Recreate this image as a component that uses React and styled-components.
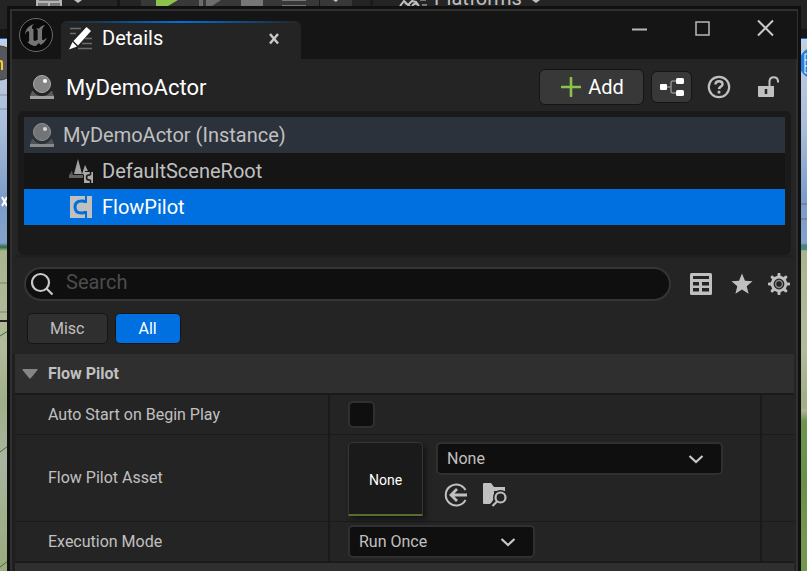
import React, { useState } from "react";
import styled, { createGlobalStyle, css } from "styled-components";
import { SiUnrealengine } from "react-icons/si";

const color = {
  panel: "#242424",
  recessed: "#1a1a1a",
  title: "#151515",
  header: "#2f2f2f",
  input: "#0f0f0f",
  outline: "#383838",
  text: "#c0c0c0",
  white: "#ffffff",
  blue: "#0070e0",
  green: "#8bc24a",
};

const GlobalStyle = createGlobalStyle`
  * { box-sizing: border-box; }
  body { margin: 0; background: #151515; }
  body, button, input, select { font-family: Roboto, "Liberation Sans", sans-serif; }
  button { border: 0; padding: 0; background: none; color: inherit; cursor: pointer; }
  svg { display: block; flex: none; }
`;

/* ---------- editor behind the floating window ---------- */

const Page = styled.div`
  position: relative;
  height: 100vh;
  overflow: hidden;
  padding: 6px 6px 0 7px;
  color: ${color.text};
`;

const Editor = styled.div`
  position: absolute;
  inset: 0;
  display: flex;
  flex-direction: column;
`;

const EditorToolbar = styled.div`
  flex: none;
  height: 29px;
  padding-left: 36px;
  display: flex;
  align-items: flex-start;
  background: ${color.panel};
`;

const PlatformsLabel = styled.span`
  margin: -14px 9px 0 0;
  font-size: 20px;
  line-height: 24px;
`;

const EditorTabs = styled.div`
  flex: none;
  height: 10px;
  background: ${color.title};
  border-bottom: 1px solid ${color.blue};
`;

const Scene = styled.div`
  flex: 1;
  display: flex;
  justify-content: space-between;
  background: linear-gradient(
    #c3cfe2 0,
    #a9bcda 90px,
    #7b9cc8 160px,
    #83a3cc 204px,
    #2f6b45 208px,
    #a9b58f 212px,
    #b2ba9d 310px,
    #a0af88 360px,
    #a9b5a0 420px,
    #9dab80 520px
  );
`;

const RightEdge = styled.div`
  width: 6px;
  background: linear-gradient(transparent 370px, #b0b69c 371px, #6f9450 382px, #6a8f4c 440px, #74964f 500px);
`;

/* ---------- details window ---------- */

const Window = styled.main`
  position: relative;
  min-height: 100vh;
  border: 3px solid #101010;
  background: ${color.panel};
  box-shadow: inset 0 0 0 2px #303030;
  padding: 2px 1px 0 2px;
`;

const TitleBar = styled.header`
  height: 48px;
  padding-left: 7px;
  display: flex;
  align-items: flex-start;
  background: ${color.title};
`;

const EngineBadge = styled.div`
  width: 34px;
  height: 34px;
  margin: 7px 8px 0 0;
  display: grid;
  place-content: center;
  overflow: hidden;
  border: 1px solid #6c6c6c;
  border-radius: 50%;
  background: #0b0b0b;
  color: #747474;
`;

const Tab = styled.div`
  position: relative;
  width: 240px;
  height: 38px;
  margin-top: 10px;
  padding: 0 19px 4px 8px;
  display: flex;
  align-items: center;
  gap: 8px;
  overflow: hidden;
  border-radius: 6px 6px 0 0;
  background: ${color.panel};

  &::before {
    content: "";
    position: absolute;
    inset: 0 0 auto;
    height: 2px;
    background: linear-gradient(90deg, ${color.panel}, ${color.blue}, ${color.panel});
  }
`;

const TabTitle = styled.h1`
  margin: 0;
  flex: 1;
  font-size: 20px;
  line-height: 24px;
  font-weight: 400;
  color: ${color.white};
`;

const WindowControls = styled.div`
  margin-left: auto;
  padding: 7px 20px 0 0;
  display: flex;
  gap: 41px;
`;

const IconButton = styled.button`
  display: grid;
  place-items: center;
  color: ${color.text};
`;

const ActorBar = styled.div`
  height: 52px;
  padding: 4px 18px 0 18px;
  display: flex;
  align-items: center;
`;

const ActorName = styled.h2`
  margin: 0 auto 0 12px;
  padding-top: 2px;
  font-size: 22px;
  line-height: 28px;
  font-weight: 400;
  color: ${color.white};
`;

const RaisedButton = styled.button`
  height: ${(p) => (p.$small ? 32 : 36)}px;
  width: ${(p) => (p.$small ? 41 : 105)}px;
  margin-right: ${(p) => (p.$small ? 15 : 7)}px;
  padding-left: ${(p) => (p.$small ? 0 : 2)}px;
  display: flex;
  align-items: center;
  justify-content: center;
  gap: 7px;
  border: 1px solid #141414;
  border-radius: 6px;
  background: #383838;
  color: ${color.white};
  font-size: 20px;
  line-height: 24px;
`;

const Tree = styled.div`
  height: 144px;
  margin: 0 6px;
  padding: 6px;
  border-radius: 6px;
  background: ${color.recessed};
`;

const treeTone = {
  root: css`
    padding-left: 6px;
    gap: 9px;
    background: #2b323b;
  `,
  child: css`
    background: ${color.title};
  `,
  selected: css`
    background: ${color.blue};
    color: ${color.white};
  `,
};

const TreeRow = styled.button`
  width: 100%;
  height: 36px;
  padding-left: 45px;
  display: flex;
  align-items: center;
  gap: 8px;
  font-size: 20px;
  line-height: 24px;
  color: ${color.text};
  ${(p) => treeTone[p.$tone]}
`;

const Splitter = styled.div`
  height: 3px;
  margin: 0 3px;
  background: #202020;
`;

const SearchBar = styled.div`
  padding: 9px 6px 0 12px;
  display: flex;
  align-items: center;
`;

const SearchField = styled.label`
  flex: 1;
  height: 34px;
  margin-right: 19px;
  padding-left: 5px;
  display: flex;
  align-items: center;
  gap: 11px;
  border: 2px solid #353535;
  border-radius: 17px;
  background: ${color.input};
`;

const SearchInput = styled.input`
  flex: 1;
  min-width: 0;
  height: 28px;
  padding: 0 0 4px;
  border: 0;
  outline: 0;
  background: transparent;
  color: ${color.text};
  font-size: 20px;

  &::placeholder {
    color: #4c4c4c;
    opacity: 1;
  }
`;

const Tools = styled.div`
  display: flex;
  align-items: center;
  gap: ${(p) => p.$gap}px;
`;

const MatrixButton = styled(IconButton)`
  margin-right: 5px;
`;

const Filters = styled.div`
  padding: 12px 15px 10px;
  display: flex;
  gap: 7px;
`;

const Filter = styled.button`
  height: 31px;
  padding: 0 ${(p) => (p.$active ? 23 : 22)}px;
  border: 1px solid #151515;
  border-radius: 5px;
  background: ${(p) => (p.$active ? color.blue : "#2f2f2f")};
  color: ${(p) => (p.$active ? color.white : color.text)};
  font-size: 16px;
  line-height: 20px;
`;

const Properties = styled.section`
  margin: 0 3px 0 0;
  border-left: 3px solid #1f1f1f;
`;

const CategoryHeader = styled.button`
  width: 100%;
  height: 39px;
  padding-left: 7px;
  display: flex;
  align-items: center;
  gap: 10px;
  background: ${color.header};
  font-size: 16px;
  line-height: 20px;
  font-weight: 700;
`;

const Rows = styled.div`
  border: solid ${color.recessed};
  border-width: 2px 0;
`;

const Row = styled.div`
  box-sizing: content-box;
  display: grid;
  grid-template-columns: 313fr 432fr 34px;
  min-height: 39px;

  & + & {
    border-top: 1px solid ${color.recessed};
  }
`;

const RowLabel = styled.label`
  align-self: center;
  padding-left: 33px;
  font-size: 16px;
  line-height: 20px;
`;

const Value = styled.div`
  padding: ${(p) => (p.$tall ? "7px 18px 5px" : "0 18px")};
  display: flex;
  align-items: ${(p) => (p.$tall ? "flex-start" : "center")};
  gap: 13px;
  border-left: 2px solid ${color.recessed};
`;

const ResetCell = styled.div`
  border-left: 2px solid ${color.recessed};
`;

const Checkbox = styled.input`
  appearance: none;
  width: 27px;
  height: 27px;
  margin: 0;
  border: 2px solid #303030;
  border-radius: 5px;
  background: ${color.input};

  &:checked {
    box-shadow: inset 0 0 0 5px ${color.input};
    background: ${color.blue};
  }
`;

const Thumbnail = styled.button`
  width: 75px;
  height: 74px;
  padding-top: 2px;
  border: 1px solid #363636;
  border-bottom: 2px solid #5a6b2f;
  border-radius: 5px 5px 0 0;
  background: ${color.recessed};
  box-shadow: 3px 3px 5px #141414;
  color: ${color.white};
  font-size: 14px;
  line-height: 20px;
`;

const AssetPicker = styled.div`
  flex: 0 0 287px;
`;

const AssetTools = styled.div`
  padding: 8px 0 0 8px;
  display: flex;
  gap: 14px;
`;

const ComboBox = styled.div`
  width: ${(p) => (p.$wide ? "100%" : "187px")};
  display: grid;
  align-items: center;

  > * {
    grid-area: 1 / 1;
  }

  > svg {
    justify-self: end;
    margin-right: 19px;
    pointer-events: none;
  }
`;

const Select = styled.select`
  appearance: none;
  width: 100%;
  height: 33px;
  padding: 0 9px;
  border: 2px solid #303030;
  border-radius: 5px;
  background: ${color.input};
  color: ${color.text};
  font-size: 16px;
`;

/* ---------- drawings ---------- */

const EditorTools = () => (
  <svg width="398" height="6" viewBox="36 0 398 6">
    <path d="M36 0h26v6H36z" fill="#b4b4b4" />
    <path d="M39 0h20v1H39zM38 3h10v3H38zM50 3h10v3H50z" fill="#777" />
    <path d="M74 0h8l-4 3z" fill="#c0c0c0" />
    <path d="M117 0h3v6h-3z" fill="#171717" />
    <path d="M141 0h211v6H141z" fill="#383838" />
    <path d="M156 0h22l-10 6h-12z" fill="#8bc24a" />
    <path d="M199 0h4v6h-4zM206 0h15l-9 6h-6z" fill="#6c6c6c" />
    <path d="M241 0h22v6h-22z" fill="#777" />
    <path d="M282 0h24v1h-24zM282 5h24v1h-24z" fill="#777" />
    <path d="M319 0h1v6h-1zM370 0h3v6h-3z" fill="#1b1b1b" />
    <path d="M333 0h5l-2 2z" fill="#c0c0c0" />
    <path d="M400 6l4-5 4 4 4-4 4 1 3 4M405 3l5 3M412 6q3-4 6-1" fill="none" stroke="#c0c0c0" strokeWidth="2" />
    <path d="M420 0h6v1h-6zM422 4h5v2h-5z" fill="#777" />
  </svg>
);

const SceneLeft = () => (
  <svg width="8" height="532" viewBox="0 0 8 532">
    <circle cx="-1" cy="24" r="17" fill="#55575a" stroke="#333" />
    <path d="M-2 31v-7q4-4 4 0v7" fill="none" stroke="#f5cf24" strokeWidth="2" />
    <path d="M2 158l5 9M7 158l-5 9" stroke="#fff" strokeWidth="2" />
    <path d="M0 56h8M0 70h8" stroke="#888f9e" />
    <path d="M0 244h8M0 273h8" stroke="#85806b" />
    <path d="M0 282h8" stroke="#222" strokeWidth="2" />
    <path d="M0 297l8-5M0 413l8-6M0 528l8-6" stroke="#3c6e31" strokeWidth="1" />
  </svg>
);

const SceneRight = () => (
  <svg width="6" height="532" viewBox="0 0 6 532">
    <circle cx="14" cy="24" r="16" fill="#2180e0" />
    <path d="M6 15H4v19h2M4 21h2M4 27h2" fill="none" stroke="#fff" strokeWidth="1" />
    <path d="M0 165h6M0 180h6" stroke="#756b66" />
    <path d="M0 209h6" stroke="#43888a" strokeWidth="4" />
  </svg>
);

const PencilIcon = () => (
  <svg width="25" height="24" viewBox="0 0 25 24">
    <path d="M1 2.500h11M1 7.500h6M16 12.500h7M13 17.500h10M9 22.500h14" stroke="#6c6c6c" strokeWidth="1.500" />
    <path d="M17.500 1l4.500 4L9 19.500 4.500 15zM3.500 16l4.500 4.500-8 3z" fill="#fff" />
  </svg>
);

const CloseTabIcon = () => (
  <svg width="16" height="16" viewBox="0 0 16 16">
    <path d="M4 4l8 9.500M12 4L4 13.500" stroke="#c8c8c8" strokeWidth="2.500" />
  </svg>
);

const ActorIcon = ({ dim }) => (
  <svg width="24" height="24" viewBox="0 0 24 24" opacity={dim ? 0.8 : 1}>
    <path d="M2 16h1q3 5 9 5t9-5h1l2 5H0z" fill="#5c5c5c" />
    <path d="M0 21h24v3H0z" fill="#a0a0a0" />
    <circle cx="12" cy="9" r="8.500" fill="#858585" stroke="#aaa" strokeWidth="1" />
    <circle cx="15" cy="6" r="2" fill="#fff" />
  </svg>
);

const PlusIcon = () => (
  <svg width="20" height="20" viewBox="0 0 20 20">
    <path d="M10 1v18M1 10h18" stroke="#8bc24a" strokeWidth="2.600" strokeLinecap="round" />
  </svg>
);

const GraphIcon = () => (
  <svg width="26" height="20" viewBox="0 0 26 20">
    <path d="M8 10h4M18 4h-4q-2 0-2 2v8q0 2 2 2h4" fill="none" stroke="#8c8c8c" strokeWidth="1.500" />
    <g fill="#fff">
      <rect x="1" y="7" width="7" height="6" rx="1" />
      <rect x="17" y="1" width="8" height="6" rx="1.500" />
      <rect x="17" y="13" width="8" height="6" rx="1.500" />
    </g>
  </svg>
);

const HelpIcon = () => (
  <svg width="24" height="24" viewBox="0 0 24 24" fill="none" stroke="#c0c0c0">
    <circle cx="12" cy="12" r="10.200" strokeWidth="2.200" />
    <path d="M8.500 9.500q0-3.300 3.500-3.300t3.500 3q0 1.600-1.700 2.500T12 14.200" strokeWidth="2.500" />
    <path d="M12 15.800v2.700" strokeWidth="2.700" />
  </svg>
);

const UnlockIcon = () => (
  <svg width="22" height="24" viewBox="0 0 22 24">
    <path d="M12.500 11V6a4.300 4.300 0 0 1 8.500 0V7.500" fill="none" stroke="#c0c0c0" strokeWidth="2" />
    <path d="M1 11h16v10q0 1-1 1H2q-1 0-1-1z" fill="#c0c0c0" />
    <path d="M9 14v5" stroke="#242424" strokeWidth="2.500" />
  </svg>
);

const SceneRootIcon = () => (
  <svg width="25" height="24" viewBox="0 0 25 24">
    <path d="M3 11.500L0 16h4zM14 14l3-1v3h-3z" fill="#555" />
    <path d="M9 0l4 15H5zM16 6l3 6h-3v3h-3z" fill="#a2a2a2" />
    <path d="M0 16h14v3H0z" fill="#626262" />
    <path d="M15 13h9v11h-9z" fill="#aaa" />
    <path d="M21.500 16H20q-2.500 0-2.500 2.500T20 21h1.500M21.500 13v3M21.500 21v3" fill="none" stroke="#151515" strokeWidth="1.500" />
  </svg>
);

const ComponentIcon = () => (
  <svg width="25" height="24" viewBox="0 0 25 24">
    <path d="M1 1h22v22H1z" fill="#c0c0c0" />
    <path d="M17 7Q15.500 6 12.500 6 6 6 6 12t6.500 6q3 0 4.500-1" fill="none" stroke="#0070e0" strokeWidth="3" />
    <path d="M17 1v7M17 16v7" stroke="#0070e0" strokeWidth="2" />
  </svg>
);

const SearchIcon = () => (
  <svg width="24" height="24" viewBox="0 0 24 24" fill="none" stroke="#c8c8c8" strokeWidth="2.200">
    <circle cx="9.500" cy="10.500" r="8.500" />
    <path d="M15.500 16.500l6 6" />
  </svg>
);

const TableIcon = () => (
  <svg width="22" height="22" viewBox="0 0 22 22">
    <rect width="22" height="22" rx="1.500" fill="#c0c0c0" />
    <path d="M3 3h16v3H3zM3 9h6v3.500H3zM12 9h7v3.500h-7zM3 15h6v3.500H3zM12 15h7v3.500h-7z" fill="#242424" />
  </svg>
);

const StarIcon = () => (
  <svg width="22" height="24" viewBox="1 0 22 24">
    <path d="M12 1.500l3 7.200 7.500.5-5.800 5 1.900 7.500L12 17.500l-6.600 4.200 1.900-7.500-5.800-5L9 8.700z" fill="#c0c0c0" />
  </svg>
);

const GearIcon = () => (
  <svg width="24" height="24" viewBox="0 0 24 24" fill="none" stroke="#c0c0c0">
    {[0, 45, 90, 135, 180, 225, 270, 315].map((a) => (
      <path key={a} d="M10 6L10.800 1h2.400l.8 5z" fill="#c0c0c0" stroke="none" transform={`rotate(${a} 12 12)`} />
    ))}
    <circle cx="12" cy="12" r="6.800" strokeWidth="2.800" />
    <circle cx="12" cy="12" r="3.400" stroke="#858585" strokeWidth="1.500" />
  </svg>
);

const ExpandedIcon = () => (
  <svg width="16" height="10" viewBox="0 0 16 10">
    <path d="M1 0h14q1 0 .5 1L9 9q-1 1-2 0L.5 1Q0 0 1 0z" fill="#858585" />
  </svg>
);

const ChevronIcon = () => (
  <svg width="16" height="10" viewBox="0 0 16 10">
    <path d="M1.500 2L8 8l6.500-6" fill="none" stroke="#c8c8c8" strokeWidth="2.200" />
  </svg>
);

const UseSelectedIcon = () => (
  <svg width="24" height="24" viewBox="0 0 24 24" fill="none" stroke="#c0c0c0">
    <path d="M21.500 7A10.500 10.500 0 1 0 21.500 17" strokeWidth="2" />
    <path d="M23 12H7M13 6l-6 6 6 6" strokeWidth="2.800" />
  </svg>
);

const BrowseIcon = () => (
  <svg width="25" height="24" viewBox="0 0 25 24">
    <path d="M1 1q0-1 1-1h7l3 4h11v4H12v7l-3 6H2q-1 0-1-1z" fill="#c0c0c0" />
    <circle cx="18.500" cy="14.500" r="7.500" fill="#242424" />
    <path d="M14 18.500l-5 5" stroke="#242424" strokeWidth="5" />
    <path d="M12 4h11v3H12z" fill="#c0c0c0" />
    <circle cx="18.500" cy="14.500" r="5" fill="none" stroke="#c0c0c0" strokeWidth="2.200" />
    <path d="M15 18.500l-4.500 4.500" stroke="#c0c0c0" strokeWidth="2.200" />
  </svg>
);

const MinimizeIcon = () => (
  <svg width="22" height="22" viewBox="0 0 22 22">
    <path d="M3 11.500h15" stroke="#b8b8b8" strokeWidth="2" />
  </svg>
);

const MaximizeIcon = () => (
  <svg width="22" height="22" viewBox="0 0 22 22">
    <path d="M4 4h13v13H4z" fill="none" stroke="#b8b8b8" strokeWidth="1.500" />
  </svg>
);

const CloseIcon = () => (
  <svg width="22" height="22" viewBox="0 0 22 22">
    <path d="M3 2.500l15 15M18 2.500l-15 15" stroke="#c8c8c8" strokeWidth="2" />
  </svg>
);

const Combo = ({ id, wide, options }) => (
  <ComboBox $wide={wide}>
    <Select id={id}>
      {options.map((o) => (
        <option key={o}>{o}</option>
      ))}
    </Select>
    <ChevronIcon />
  </ComboBox>
);

export default function App() {
  const [filter, setFilter] = useState("All");
  const [selected, setSelected] = useState("FlowPilot");
  const tone = (name) => (selected === name ? "selected" : "child");

  return (
    <Page>
      <GlobalStyle />
      <Editor>
        <EditorToolbar>
          <EditorTools />
          <PlatformsLabel>Platforms</PlatformsLabel>
          <svg width="12" height="4" viewBox="0 0 12 4">
            <path d="M1 0h8L5 3z" fill="#c0c0c0" />
          </svg>
        </EditorToolbar>
        <EditorTabs />
        <Scene>
          <SceneLeft />
          <RightEdge>
            <SceneRight />
          </RightEdge>
        </Scene>
      </Editor>

      <Window>
        <TitleBar>
          <EngineBadge>
            <SiUnrealengine size={36} />
          </EngineBadge>
          <Tab>
            <PencilIcon />
            <TabTitle>Details</TabTitle>
            <IconButton aria-label="Close tab">
              <CloseTabIcon />
            </IconButton>
          </Tab>
          <WindowControls>
            <IconButton aria-label="Minimize">
              <MinimizeIcon />
            </IconButton>
            <IconButton aria-label="Maximize">
              <MaximizeIcon />
            </IconButton>
            <IconButton aria-label="Close">
              <CloseIcon />
            </IconButton>
          </WindowControls>
        </TitleBar>

        <ActorBar>
          <ActorIcon />
          <ActorName>MyDemoActor</ActorName>
          <RaisedButton>
            <PlusIcon />
            Add
          </RaisedButton>
          <RaisedButton $small aria-label="Edit blueprint">
            <GraphIcon />
          </RaisedButton>
          <Tools $gap={26}>
            <IconButton aria-label="Help">
              <HelpIcon />
            </IconButton>
            <IconButton aria-label="Lock">
              <UnlockIcon />
            </IconButton>
          </Tools>
        </ActorBar>

        <Tree role="tree" aria-label="Components">
          <TreeRow role="treeitem" $tone="root">
            <ActorIcon dim />
            MyDemoActor (Instance)
          </TreeRow>
          <TreeRow role="treeitem" $tone={tone("DefaultSceneRoot")} onClick={() => setSelected("DefaultSceneRoot")}>
            <SceneRootIcon />
            DefaultSceneRoot
          </TreeRow>
          <TreeRow role="treeitem" $tone={tone("FlowPilot")} onClick={() => setSelected("FlowPilot")}>
            <ComponentIcon />
            FlowPilot
          </TreeRow>
        </Tree>
        <Splitter />

        <SearchBar>
          <SearchField>
            <SearchIcon />
            <SearchInput type="text" placeholder="Search" aria-label="Search" />
          </SearchField>
          <Tools $gap={14}>
            <MatrixButton aria-label="Property matrix">
              <TableIcon />
            </MatrixButton>
            <IconButton aria-label="Favorites">
              <StarIcon />
            </IconButton>
            <IconButton aria-label="Settings">
              <GearIcon />
            </IconButton>
          </Tools>
        </SearchBar>

        <Filters>
          {["Misc", "All"].map((name) => (
            <Filter key={name} $active={filter === name} onClick={() => setFilter(name)}>
              {name}
            </Filter>
          ))}
        </Filters>

        <Properties>
          <CategoryHeader>
            <ExpandedIcon />
            Flow Pilot
          </CategoryHeader>
          <Rows>
            <Row>
              <RowLabel htmlFor="autostart">Auto Start on Begin Play</RowLabel>
              <Value>
                <Checkbox id="autostart" type="checkbox" />
              </Value>
              <ResetCell />
            </Row>
            <Row>
              <RowLabel htmlFor="asset">Flow Pilot Asset</RowLabel>
              <Value $tall>
                <Thumbnail>None</Thumbnail>
                <AssetPicker>
                  <Combo id="asset" wide options={["None"]} />
                  <AssetTools>
                    <IconButton aria-label="Use selected asset">
                      <UseSelectedIcon />
                    </IconButton>
                    <IconButton aria-label="Browse to asset">
                      <BrowseIcon />
                    </IconButton>
                  </AssetTools>
                </AssetPicker>
              </Value>
              <ResetCell />
            </Row>
            <Row>
              <RowLabel htmlFor="mode">Execution Mode</RowLabel>
              <Value>
                <Combo id="mode" options={["Run Once", "Loop"]} />
              </Value>
              <ResetCell />
            </Row>
          </Rows>
          <CategoryHeader aria-label="Next category" />
        </Properties>
      </Window>
    </Page>
  );
}
